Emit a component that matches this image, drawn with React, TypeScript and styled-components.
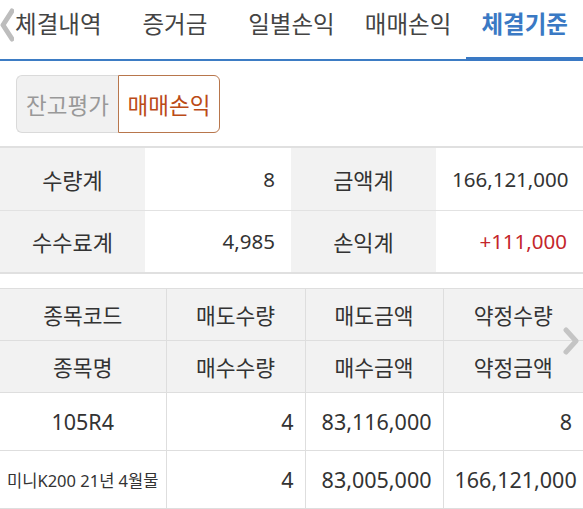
import styled, { createGlobalStyle } from "styled-components";

const GlobalStyle = createGlobalStyle`
  html, body {
    margin: 0;
    padding: 0;
    background: #fff;
  }
  body {
    font-family: "Noto Sans", "Noto Sans CJK KR", sans-serif;
    color: #333;
  }
  * {
    box-sizing: border-box;
  }
`;

const Page = styled.div`
  position: relative;
  width: 583px;
  height: 509px;
  overflow: hidden;
`;

const TabBar = styled.nav`
  position: relative;
  display: grid;
  grid-template-columns: repeat(5, 1fr);
  height: 61px;
  border-bottom: 2px solid #3d7cc4;
`;

const Tab = styled.div<{ $active?: boolean }>`
  display: flex;
  justify-content: center;
  padding-top: 8px;
  font-size: 23.5px;
  line-height: 32px;
  white-space: nowrap;
  color: ${(p) => (p.$active ? "#3a79c4" : "#444")};
  font-weight: ${(p) => (p.$active ? 700 : 400)};
  margin-bottom: -2px;
  border-bottom: ${(p) => (p.$active ? "4px solid #3a79c4" : "2px solid transparent")};
`;

const Chevron = styled.svg<{ $side: "left" | "right" }>`
  position: absolute;
  ${(p) => (p.$side === "left" ? "left: 0; top: 8px;" : "right: 3px; top: 327px;")}
`;

const Content = styled.div`
  padding-top: 14px;
`;

const Toggle = styled.div`
  display: flex;
  margin-left: 16px;
  margin-bottom: 13px;
`;

const ToggleButton = styled.div<{ $on?: boolean }>`
  width: 102px;
  height: 58px;
  display: flex;
  align-items: center;
  justify-content: center;
  font-size: 22.5px;
  white-space: nowrap;
  background: ${(p) => (p.$on ? "#fff" : "#f1f1f1")};
  color: ${(p) => (p.$on ? "#bb4b17" : "#999")};
  border: 1px solid ${(p) => (p.$on ? "#b8764c" : "#dadada")};
  border-radius: ${(p) => (p.$on ? "0 6px 6px 0" : "6px 0 0 6px")};
  ${(p) => (p.$on ? "" : "border-right: none;")}
`;

const SummaryTable = styled.table`
  width: 100%;
  border-collapse: collapse;
  table-layout: fixed;
  border-top: 2px solid #e0e0e0;
  border-bottom: 2px solid #e0e0e0;
  margin-bottom: 14px;

  td {
    height: 63px;
    padding: 0 16px;
    border-bottom: 1px solid #e2e2e2;
  }
  tr:last-child td {
    border-bottom: none;
  }
`;

const Label = styled.td`
  background: #f2f2f2;
  text-align: center;
  font-size: 22px;
  color: #333;
`;

const Value = styled.td<{ $tone?: "plus" }>`
  text-align: right;
  font-size: 20.5px;
  color: ${(p) => (p.$tone === "plus" ? "#c4262b" : "#333")};
`;

const ListTable = styled.table`
  width: 100%;
  border-collapse: collapse;
  table-layout: fixed;
  border-top: 1px solid #dcdcdc;

  td, th {
    border: 1px solid #dedede;
    font-weight: 400;
    padding: 0 11px;
  }
  td:first-child, th:first-child {
    border-left: none;
  }
  td:last-child, th:last-child {
    border-right: none;
  }
  th {
    height: 52px;
    background: #f2f2f2;
    font-size: 21.5px;
    text-align: center;
    color: #333;
    white-space: nowrap;
  }
  td {
    height: 58px;
    font-size: 21.5px;
    text-align: right;
    color: #333;
  }
`;

const Code = styled.td<{ $small?: boolean }>`
  && {
    text-align: center;
    padding: 0 2px;
    font-size: ${(p) => (p.$small ? "16.5px" : "21.5px")};
    white-space: nowrap;
  }
`;

const rows = [
  { code: "105R4", qty: "4", amt: "83,116,000", last: "8" },
  { code: "미니K200 21년 4월물", qty: "4", amt: "83,005,000", last: "166,121,000", small: true },
];

export default function App() {
  const tabs = ["체결내역", "증거금", "일별손익", "매매손익", "체결기준"];
  return (
    <Page>
      <GlobalStyle />
      <TabBar>
        {tabs.map((t, i) => (
          <Tab key={t} $active={i === 4}>
            {t}
          </Tab>
        ))}
      </TabBar>
      <Chevron $side="left" width="14" height="34" viewBox="0 0 14 34">
        <path d="M12 3 L3 17 L12 31" fill="none" stroke="#bdbdbd" strokeWidth="5" strokeLinecap="round" strokeLinejoin="round" />
      </Chevron>
      <Chevron $side="right" width="17" height="28" viewBox="0 0 17 28">
        <path d="M3 3 L13 14 L3 25" fill="none" stroke="#c4c4c4" strokeWidth="5" strokeLinecap="round" strokeLinejoin="round" />
      </Chevron>
      <Content>
        <Toggle>
          <ToggleButton>잔고평가</ToggleButton>
          <ToggleButton $on>매매손익</ToggleButton>
        </Toggle>
        <SummaryTable>
          <colgroup>
            <col style={{ width: 145 }} />
            <col style={{ width: 146 }} />
            <col style={{ width: 145 }} />
            <col />
          </colgroup>
          <tbody>
            <tr>
              <Label>수량계</Label>
              <Value>8</Value>
              <Label>금액계</Label>
              <Value>166,121,000</Value>
            </tr>
            <tr>
              <Label>수수료계</Label>
              <Value>4,985</Value>
              <Label>손익계</Label>
              <Value $tone="plus">+111,000</Value>
            </tr>
          </tbody>
        </SummaryTable>
        <ListTable>
          <colgroup>
            <col style={{ width: 166 }} />
            <col style={{ width: 139 }} />
            <col style={{ width: 138 }} />
            <col />
          </colgroup>
          <thead>
            <tr>
              <th>종목코드</th>
              <th>매도수량</th>
              <th>매도금액</th>
              <th>약정수량</th>
            </tr>
            <tr>
              <th>종목명</th>
              <th>매수수량</th>
              <th>매수금액</th>
              <th>약정금액</th>
            </tr>
          </thead>
          <tbody>
            {rows.map((r) => (
              <tr key={r.code}>
                <Code $small={r.small}>{r.code}</Code>
                <td>{r.qty}</td>
                <td>{r.amt}</td>
                <td>{r.last}</td>
              </tr>
            ))}
          </tbody>
        </ListTable>
      </Content>
    </Page>
  );
}
